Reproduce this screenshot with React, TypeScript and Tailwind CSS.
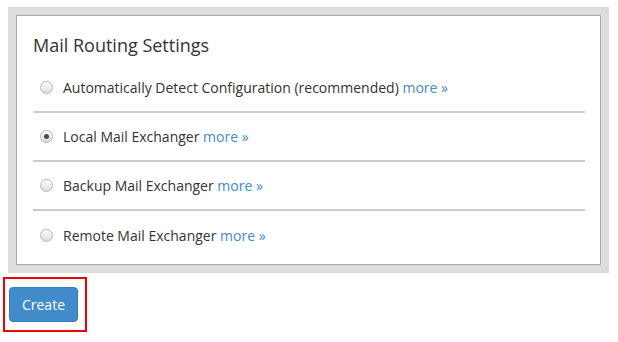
import React from "react";

function Radio({ checked }: { checked?: boolean }) {
  return (
    <span className="relative inline-flex h-[13px] w-[13px] shrink-0 items-center justify-center rounded-full border border-[#b8b8b8] bg-gradient-to-b from-[#fdfdfd] to-[#dcdcdc] shadow-[inset_0_1px_1px_rgba(255,255,255,0.8)]">
      {checked && <span className="h-[5px] w-[5px] rounded-full bg-[#4a4a4a]" />}
    </span>
  );
}

function Row({ label, checked, last }: { label: string; checked?: boolean; last?: boolean }) {
  return (
    <div className={"flex h-[49px] items-center pl-[7px] " + (last ? "" : "border-b-2 border-[#cccccc]")}>
      <Radio checked={checked} />
      <span className="ml-[10px] text-[14px] text-[#333333]">
        {label} <span className="text-[#428bca]">more »</span>
      </span>
    </div>
  );
}

export default function App() {
  return (
    <div className="min-h-[342px] w-[618px] bg-white pl-[8px] pt-[7px]" style={{ fontFamily: '"Open Sans", sans-serif' }}>
      <div className="w-[601px] bg-[#dddddd] p-[8px]">
        <div className="border border-[#aaaaaa] bg-white pb-[4px] pl-[16px] pr-[15px] pt-[17px]">
          <h2 className="mb-[7px] text-[18px] leading-[24px] text-[#333333]">Mail Routing Settings</h2>
          <Row label="Automatically Detect Configuration (recommended)" />
          <Row label="Local Mail Exchanger" checked />
          <Row label="Backup Mail Exchanger" />
          <Row label="Remote Mail Exchanger" last />
        </div>
      </div>
      <div className="ml-[-5px] mt-[4px] inline-block border-2 border-[#ee0000] py-[8px] pl-[4px] pr-[7px]">
        <button className="h-[35px] w-[69px] rounded-[4px] border border-[#357ebd] bg-[#428bca] text-[14px] text-white">
          Create
        </button>
      </div>
    </div>
  );
}
